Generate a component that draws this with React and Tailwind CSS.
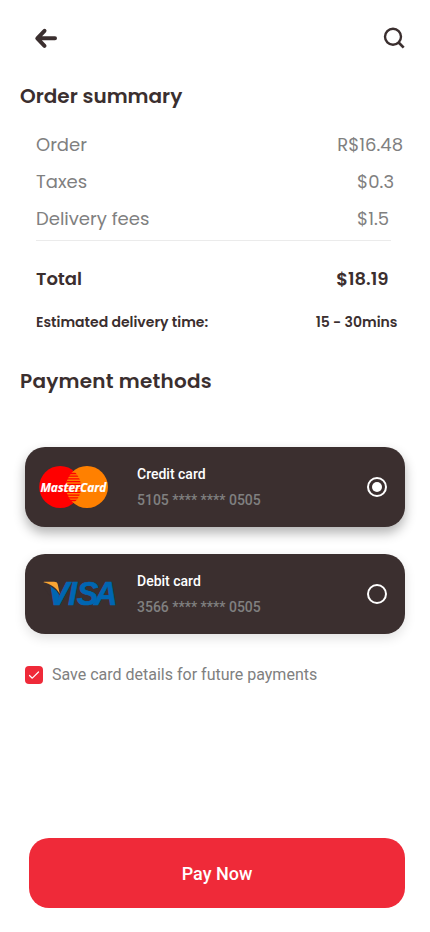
import React from "react";

const display = "font-['Poppins','Inter',sans-serif]";

function MasterCardLogo() {
  return (
    <svg width="72" height="44" viewBox="0 0 72 44" className="block overflow-visible">
      <defs>
        <clipPath id="lens">
          <circle cx="21.2" cy="22" r="21" />
        </clipPath>
      </defs>
      <circle cx="21.2" cy="22" r="21" fill="#ff0000" />
      <circle cx="48" cy="22" r="21" fill="#ff8000" />
      <g clipPath="url(#lens)" stroke="#ff0000" strokeWidth="1.3">
        <path d="M31 8.5h10M29 11.2h12M28 13.9h14M28 16.6h15M27 19.3h16M27 22h16M27 24.7h15M28 27.4h14M28 30.1h14M29 32.8h12M31 35.5h10" />
      </g>
      <text x="1.4" y="26.5" textLength="66" lengthAdjust="spacingAndGlyphs" fontFamily="Open Sans, sans-serif" fontStyle="italic" fontWeight="700" fontSize="12.8" fill="#fff" stroke="#fff" strokeWidth="0.2">MasterCard</text>
    </svg>
  );
}

function VisaLogo() {
  return (
    <svg width="78" height="28" viewBox="0 0 78 28" className="block overflow-visible">
      <text x="4.8 25 33.8 51" y="25.2" fontFamily="Liberation Sans, sans-serif" fontStyle="italic" fontWeight="700" fontSize="32.5" fill="#0066b2" stroke="#0066b2" strokeWidth="0.6">VISA</text>
      <path d="M0 0H16.2V12L7.5 8L7 16L0 6Z" fill="#3b2f2f" />
      <path d="M7.2 6.3C11 8.6 14 11.5 16 14.5L15.5 20H11.5Z" fill="#0066b2" />
      <path d="M.5 2.2L1 1.8H11C13.2 1.8 14.2 2.5 14.7 4.2L16.8 14C13.6 7.8 8 4 .5 2.2Z" fill="#f9a533" />
    </svg>
  );
}

function Radio({ checked }) {
  return (
    <span className="flex size-5 items-center justify-center rounded-full border-2 border-white">
      {checked && <span className="size-2.5 rounded-full bg-white" />}
    </span>
  );
}

function PaymentCard({ logo, title, number, checked, shadow }) {
  return (
    <div className={`flex h-20 w-[380px] items-center rounded-[20px] bg-[#3b2f2f] pl-3.5 pr-[18px] ${shadow}`}>
      <div className="w-[98px]">{logo}</div>
      <div className="flex-1 pb-px text-sm font-medium leading-[26px]">
        <div className="text-white">{title}</div>
        <div className="text-[#808080]">{number}</div>
      </div>
      <Radio checked={checked} />
    </div>
  );
}

function Row({ label, value, className }) {
  return (
    <div className={`flex items-center justify-between pl-9 whitespace-nowrap ${className}`}>
      <span>{label}</span>
      <span>{value}</span>
    </div>
  );
}

export default function App() {
  return (
    <div className="flex h-[932px] w-[430px] flex-col overflow-hidden bg-white font-['Roboto',sans-serif] text-[#3b2f2f]">
      <header className="flex h-[76px] items-center justify-between pl-[34px] pr-[24px]">
        <svg width="24" height="24" viewBox="0 0 24 24" fill="none" stroke="currentColor" strokeWidth="4" strokeLinecap="round" strokeLinejoin="round">
          <path d="M21 12.3H4M10.5 4.8L3.3 12.3L10.5 19.8" />
        </svg>
        <svg width="24" height="24" viewBox="0 0 24 24" fill="none" stroke="currentColor" strokeWidth="2.4">
          <circle cx="11" cy="10.7" r="8" />
          <path d="M16.6 16.5L21.7 21.6" strokeWidth="2.7" />
        </svg>
      </header>

      <section className={display}>
        <h2 className="mt-1 h-8 pl-5 text-[20px] leading-8 font-semibold">Order summary</h2>
        <div className="mt-[14px] text-[18px] text-[#808080]">
          <Row className="h-[37px] pr-[27px]" label="Order" value="R$16.48" />
          <Row className="h-[37px] pr-[36px]" label="Taxes" value="$0.3" />
          <Row className="h-[37px] pr-[41px]" label="Delivery fees" value="$1.5" />
        </div>
        <div className="mr-[39px] ml-9 mt-[3px] h-px bg-[#ebebeb]" />
        <Row className="mt-[23px] h-7 pr-[41.5px] text-[18px] font-semibold" label="Total" value="$18.19" />
        <Row className="mt-[20px] h-5 pr-[32.5px] text-[14px] font-semibold" label="Estimated delivery time:" value="15 - 30mins" />
        <h2 className="mt-[33px] h-8 pl-5 text-[20px] leading-8 font-semibold tracking-[0.23px]">Payment methods</h2>
      </section>

      <section className="mt-[50px] flex flex-col gap-[27px] pl-[25px]">
        <PaymentCard logo={<MasterCardLogo />} title="Credit card" number="5105 **** **** 0505" checked shadow="shadow-[0_6px_12px_rgba(0,0,0,0.3)]" />
        <PaymentCard logo={<div className="pl-1"><VisaLogo /></div>} title="Debit card" number="3566 **** **** 0505" shadow="shadow-[0_4px_12px_rgba(0,0,0,0.12)]" />
      </section>

      <div className="mt-[32px] flex h-[18px] items-center gap-[9px] pl-[25px]">
        <span className="flex size-[18px] items-center justify-center rounded bg-[#ef2a39]">
          <svg width="12" height="12" viewBox="0 0 12 12" fill="none" stroke="#fff" strokeWidth="1.2" strokeLinecap="round" strokeLinejoin="round">
            <path d="M1.5 6.5L4.3 9.2L10.5 3" />
          </svg>
        </span>
        <span className="text-base text-[#808080]">Save card details for future payments</span>
      </div>

      <button className="mt-[154px] ml-[29px] h-[70px] w-[376px] rounded-[20px] bg-[#ef2a39] text-[18px] font-medium text-white">Pay Now</button>
    </div>
  );
}
